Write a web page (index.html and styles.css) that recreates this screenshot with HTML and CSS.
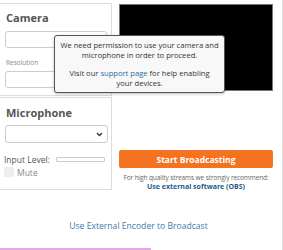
FILE: index.html
```html
<!DOCTYPE html>
<html lang="en">
<head>
  <meta charset="UTF-8" />
  <meta name="viewport" content="width=device-width, initial-scale=1" />
  <title>Go Live</title>
  <link rel="stylesheet" href="styles.css">
</head>
<body>
  <div class="page">
    <div class="top">
      <div class="left">
        <div class="panel camera">
          <h2>Camera</h2>
          <input type="text" class="field" />
          <label class="small-label">Resolution</label>
          <input type="text" class="field field2" />
        </div>
        <div class="panel mic">
          <h2>Microphone</h2>
          <div class="select">
            <svg width="7" height="5" viewBox="0 0 7 5"><path d="M1 1 L3.5 3.5 L6 1" fill="none" stroke="#333" stroke-width="1.4"/></svg>
          </div>
          <div class="level-row">
            <span>Input Level:</span>
            <div class="level-bar"></div>
          </div>
          <div class="mute-row">
            <span class="check"></span>
            <span>Mute</span>
          </div>
        </div>
      </div>

      <div class="right">
        <div class="video"></div>
        <button class="btn">Start Broadcasting</button>
        <div class="hint">For high quality streams we strongly recommend:</div>
        <a href="#" class="obs">Use external software (OBS)</a>
      </div>

      <div class="tooltip">
        <p>We need permission to use your camera and<br>microphone in order to proceed.</p>
        <p>Visit our <a href="#">support page</a> for help enabling<br>your devices.</p>
      </div>
    </div>

    <div class="footer">
      <a href="#">Use External Encoder to Broadcast</a>
    </div>
    <div class="progress"></div>
  </div>
</body>
</html>
```

FILE: styles.css
```css
body {
  font-family: 'Open Sans', sans-serif;
  background: #fff;
  margin: 0;
  overflow: hidden;
}

.page {
  width: 282px;
  height: 250px;
  border-right: 1px solid #ddd;
  display: flex;
  flex-direction: column;
}

.top {
  position: relative;
  display: grid;
  grid-template-columns: 112px 154px;
  column-gap: 7px;
  padding-top: 3px;
}

.panel {
  border: 1px solid #ddd;
  border-left: none;
  padding: 0 4px 0 5px;
}

.panel h2 {
  margin: 0;
  font-size: 11px;
  line-height: 13px;
  font-weight: 700;
  color: #555;
  padding-left: 1px;
}

.camera {
  padding-top: 7px;
  padding-bottom: 7px;
}

.field {
  display: block;
  box-sizing: border-box;
  width: 102px;
  height: 17px;
  margin: 7px 0 0;
  border: 1px solid #ccc;
  border-radius: 3px;
  padding: 0;
}

.field2 {
  margin-top: 4px;
}

.small-label {
  display: block;
  margin-top: 10px;
  font-size: 6.5px;
  line-height: 9px;
  color: #888;
  padding-left: 1px;
}

.mic {
  margin-top: 1px;
  padding-top: 8px;
  padding-bottom: 12px;
  padding-left: 4px;
}

.mic h2 {
  padding-left: 2px;
}

.select {
  box-sizing: border-box;
  width: 103px;
  height: 18px;
  margin-top: 6px;
  margin-left: 1px;
  border: 1px solid #ccc;
  border-radius: 3px;
  display: flex;
  align-items: center;
  justify-content: flex-end;
  padding-right: 4px;
}

.level-row {
  display: flex;
  align-items: center;
  margin-top: 11px;
  height: 11px;
  font-size: 8.5px;
  color: #555;
}

.level-bar {
  box-sizing: border-box;
  width: 49px;
  height: 5px;
  margin-left: 6px;
  border: 1px solid #ccc;
  border-radius: 1px;
}

.mute-row {
  display: flex;
  align-items: center;
  gap: 3px;
  margin-top: 2px;
  height: 10px;
  font-size: 8.5px;
  color: #888;
}

.check {
  width: 10px;
  height: 10px;
  background: #eee;
  border-radius: 1px;
}

.right {
  display: flex;
  flex-direction: column;
  align-items: center;
}

.video {
  box-sizing: border-box;
  width: 154px;
  height: 87px;
  margin-top: 1px;
  background: #000;
  border: 1px solid #777;
}

.btn {
  margin-top: 59px;
  width: 154px;
  height: 18px;
  border: none;
  border-radius: 2px;
  background: #f47321;
  color: #fff;
  font-family: inherit;
  font-weight: 700;
  font-size: 8.5px;
  padding: 0;
}

.hint {
  margin-top: 5px;
  font-size: 6.5px;
  line-height: 9px;
  color: #666;
  white-space: nowrap;
  letter-spacing: -0.1px;
}

.obs {
  font-size: 7px;
  line-height: 10px;
  font-weight: 700;
  color: #1d5c8a;
  text-decoration: none;
}

.tooltip {
  position: absolute;
  left: 54px;
  top: 35px;
  box-sizing: border-box;
  width: 171px;
  height: 58px;
  padding: 4px 2px 0;
  background: #f8f8f8;
  border: 1px solid #555;
  border-radius: 3px;
  box-shadow: 0 1px 3px rgba(0,0,0,0.25);
  text-align: center;
  font-size: 7.6px;
  line-height: 10px;
  color: #333;
  white-space: nowrap;
}

.tooltip p {
  margin: 0 0 8px;
}

.tooltip a {
  color: #1d6fa5;
  text-decoration: none;
}

.footer {
  flex: 1;
  display: flex;
  align-items: center;
  justify-content: center;
  padding-right: 5px;
  padding-top: 12px;
}

.footer a {
  font-size: 8.6px;
  color: #3d7aa8;
  text-decoration: none;
}

.progress {
  width: 151px;
  height: 2px;
  background: #e4a5ea;
}
```
